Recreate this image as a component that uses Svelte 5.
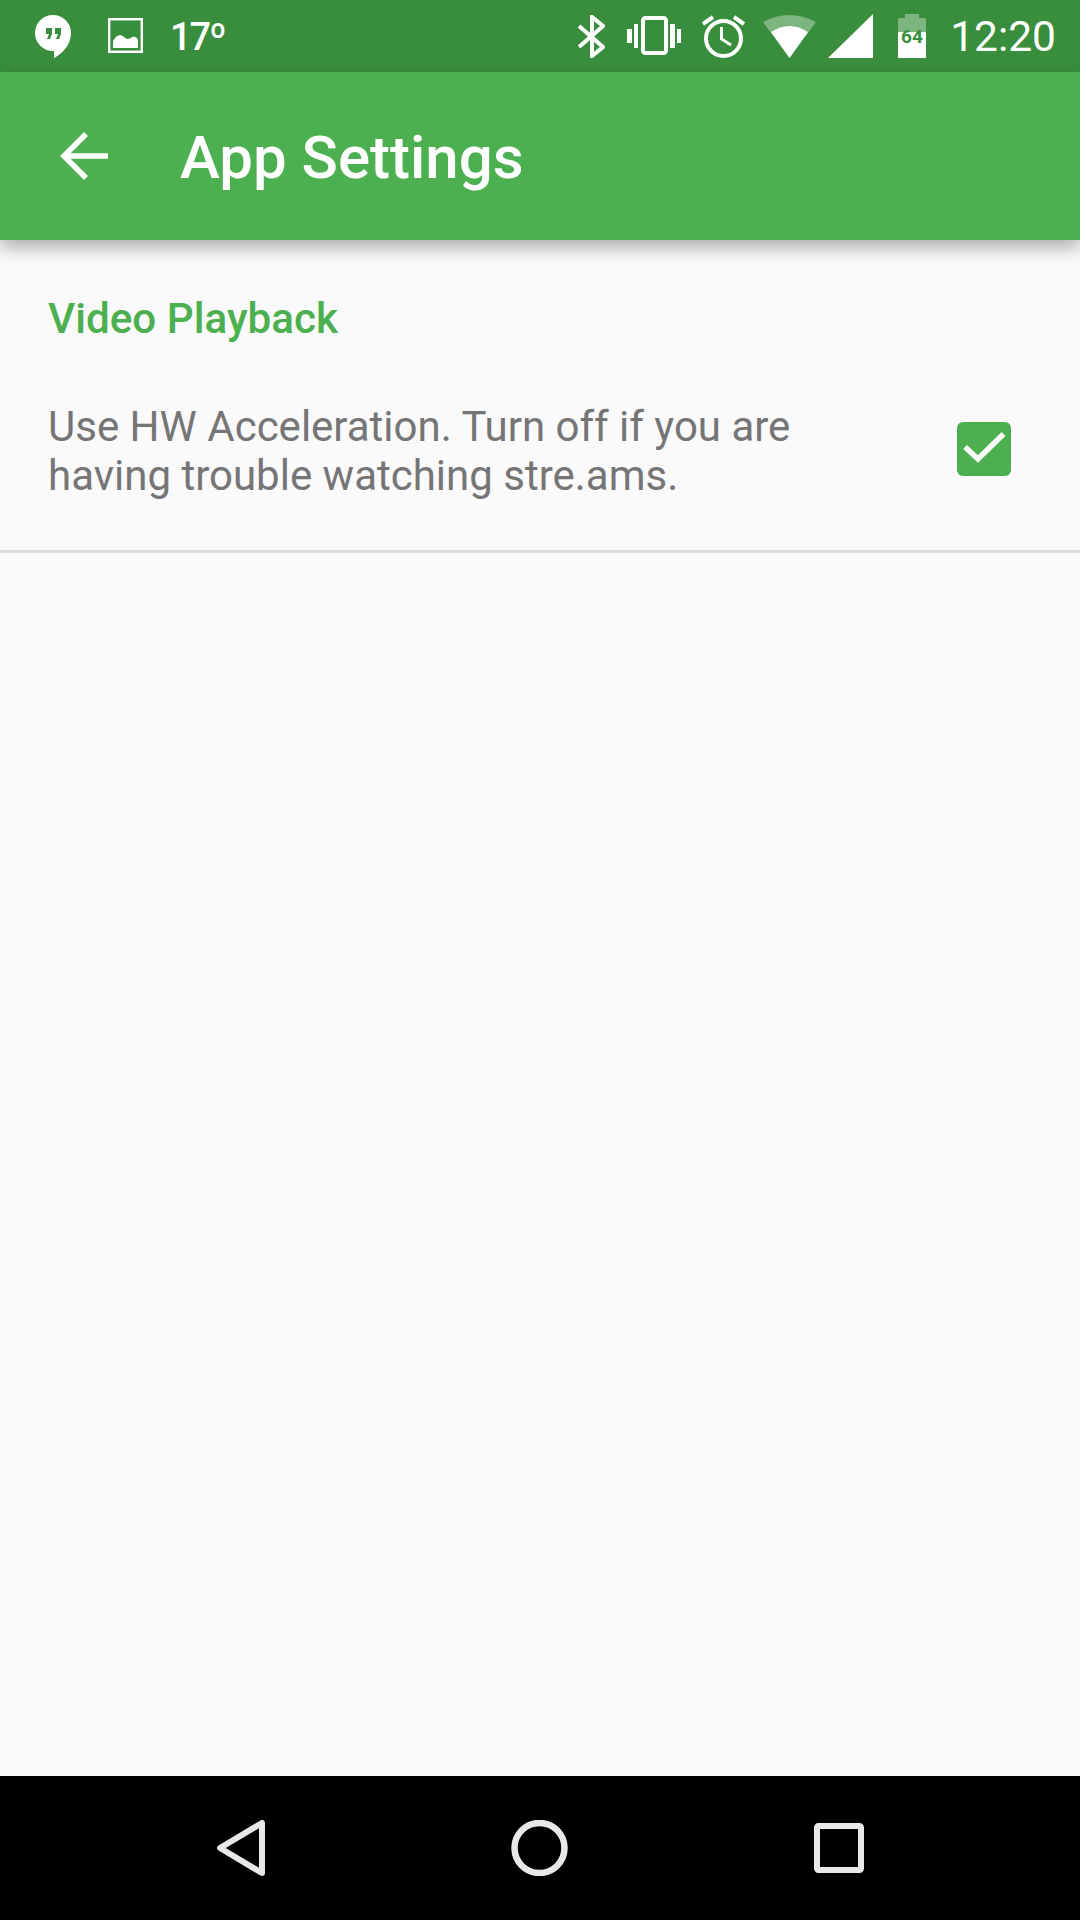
<script>
	let useHw = true;
</script>

<div class="screen">
	<div class="status-bar">
		<div class="status-left">
			<!-- hangouts -->
			<svg class="i-hangouts" width="36" height="43" viewBox="0 0 36 43">
				<path fill="#fff" d="M18 0A18 18 0 0 0 18 36H19V43C27 39 36 30 36 18A18 18 0 0 0 18 0Z" />
				<path fill="#388e3c" d="M11 13H17V19L15 24H12L14 19H11ZM20 13H26V19L24 24H21L23 19H20Z" />
			</svg>
			<!-- picture -->
			<svg class="i-image" width="35" height="35" viewBox="0 0 35 35">
				<rect x="1.2" y="1.2" width="32.6" height="32.6" fill="none" stroke="#fff" stroke-width="2.4" />
				<path fill="#fff" d="M5 30V23C7 19 10 17 12 17C15 17 17 21 20 21C23 21 24 18 27 19C29 19 30 22 30 24V30Z" />
			</svg>
			<span class="temp">17º</span>
		</div>
		<div class="status-right">
			<!-- bluetooth -->
			<svg class="i-bt" width="27" height="43" viewBox="0 0 27 43">
				<path fill="none" stroke="#fff" stroke-width="4" d="M1 11L25 32L14 41V2L25 11L1 32" />
			</svg>
			<!-- vibrate -->
			<svg class="i-vib" width="54" height="39" viewBox="0 0 54 39">
				<rect x="16" y="2" width="23" height="35" rx="2.5" fill="none" stroke="#fff" stroke-width="4" />
				<path fill="#fff" d="M0 13H5V27H0ZM7 8H11V32H7ZM43 8H48V32H43ZM50 13H54V27H50Z" />
			</svg>
			<!-- alarm -->
			<svg class="i-alarm" width="43" height="43" viewBox="0 0 43 43">
				<circle cx="21.5" cy="23.5" r="17.5" fill="none" stroke="#fff" stroke-width="4" />
				<path fill="none" stroke="#fff" stroke-width="3" d="M19.5 12V24L29 30" />
				<path fill="none" stroke="#fff" stroke-width="4" d="M1 9L11 2M32 2L42 9" />
			</svg>
			<!-- wifi -->
			<svg class="i-wifi" width="53" height="43" viewBox="0 0 53 43">
				<path fill="#fff" opacity="0.35" d="M0 7Q26.5 -7 53 7L26.5 43Z" />
				<path fill="#fff" d="M8 17Q26.5 5 45 17L26.5 43Z" />
			</svg>
			<!-- signal -->
			<svg class="i-signal" width="45" height="44" viewBox="0 0 45 44">
				<path fill="#fff" d="M0 44L45 0V44Z" />
			</svg>
			<!-- battery -->
			<svg class="i-battery" width="28" height="44" viewBox="0 0 28 44">
				<path fill="#fff" opacity="0.35" d="M7 0H21V4H28V18H0V4H7Z" />
				<path fill="#fff" d="M0 18H28V44H0Z" />
				<text x="14" y="29" text-anchor="middle" class="battery-level">64</text>
			</svg>
			<span class="clock">12:20</span>
		</div>
	</div>

	<header class="toolbar">
		<svg class="back" width="48" height="48" viewBox="0 0 48 48">
			<path fill="none" stroke="#fff" stroke-width="5.5" d="M48 24H4M26 2L4 24L26 46" />
		</svg>
		<h1>App Settings</h1>
	</header>

	<main class="content">
		<h2>Video Playback</h2>
		<label class="pref">
			<span class="pref-text">Use HW Acceleration. Turn off if you are having trouble watching stre.ams.</span>
			<input type="checkbox" bind:checked={useHw} />
			<span class="box" class:checked={useHw}>
				<svg width="54" height="54" viewBox="0 0 54 54">
					<path fill="none" stroke="#fafafa" stroke-width="5.5" d="M8 25L21 37L46.5 12" />
				</svg>
			</span>
		</label>
	</main>

	<nav class="nav-bar">
		<svg width="48" height="56" viewBox="0 0 48 56">
			<path fill="none" stroke="#e8e8e8" stroke-width="6" stroke-linejoin="round" d="M45 3V53L3 28Z" />
		</svg>
		<svg width="57" height="56" viewBox="0 0 57 56">
			<ellipse cx="28.5" cy="28" rx="25" ry="25" fill="none" stroke="#e8e8e8" stroke-width="6.5" />
		</svg>
		<svg width="50" height="50" viewBox="0 0 50 50">
			<rect x="3" y="3" width="44" height="44" rx="1.5" fill="none" stroke="#e8e8e8" stroke-width="6" />
		</svg>
	</nav>
</div>

<style>
	:global(body) {
		background: #fafafa;
	}

	.screen {
		width: 1080px;
		height: 1920px;
		display: flex;
		flex-direction: column;
		background: #fafafa;
		font-family: Roboto, "Liberation Sans", sans-serif;
		overflow: hidden;
	}

	.status-bar {
		height: 72px;
		flex: none;
		display: flex;
		justify-content: space-between;
		background: #388e3c;
		color: #fff;
		padding: 0 24px 0 35px;
		box-sizing: border-box;
	}

	.status-left,
	.status-right {
		display: flex;
		align-items: flex-start;
	}

	.status-bar svg {
		display: block;
	}

	.i-hangouts {
		margin-top: 15px;
	}

	.i-image {
		margin: 18px 0 0 37px;
	}

	.temp {
		margin: 15px 0 0 27px;
		font-size: 38px;
		line-height: 44px;
		font-weight: 500;
		letter-spacing: -2px;
	}

	.i-bt {
		margin-top: 15px;
	}

	.i-vib {
		margin: 16px 0 0 22px;
	}

	.i-alarm {
		margin: 15px 0 0 21px;
	}

	.i-wifi {
		margin: 15px 0 0 18px;
	}

	.i-signal {
		margin: 14px 0 0 12px;
	}

	.i-battery {
		margin: 14px 0 0 25px;
	}

	.battery-level {
		font-size: 19px;
		font-weight: 700;
		fill: #388e3c;
	}

	.clock {
		margin: 14px 0 0 24px;
		font-size: 42.5px;
		line-height: 46px;
	}

	.toolbar {
		height: 168px;
		flex: none;
		display: flex;
		align-items: center;
		background: #4caf50;
		box-shadow: 0 8px 16px rgba(0, 0, 0, 0.3);
		padding-left: 60px;
		position: relative;
	}

	.back {
		flex: none;
	}

	h1 {
		margin: 3px 0 0 72px;
		color: #fff;
		font-size: 60px;
		font-weight: 500;
	}

	.content {
		flex: 1;
	}

	h2 {
		margin: 54px 48px 0;
		color: #4caf50;
		font-size: 42.2px;
		line-height: 50px;
		font-weight: 500;
	}

	.pref {
		height: 198px;
		margin-top: 8px;
		display: flex;
		align-items: center;
		justify-content: space-between;
		border-bottom: 3px solid #dcdcdc;
		padding: 0 69px 0 48px;
	}

	.pref-text {
		width: 780px;
		color: #757575;
		font-size: 42px;
		line-height: 49px;
	}

	.pref input {
		display: none;
	}

	.box {
		width: 54px;
		height: 54px;
		margin-bottom: 5px;
		border-radius: 6px;
		border: 3px solid #9e9e9e;
		box-sizing: border-box;
		display: block;
	}

	.box svg {
		display: none;
	}

	.box.checked {
		background: #4caf50;
		border: 0;
	}

	.box.checked svg {
		display: block;
	}

	.nav-bar {
		height: 144px;
		flex: none;
		background: #000;
		display: flex;
		align-items: center;
		justify-content: center;
		gap: 246px;
	}
</style>
